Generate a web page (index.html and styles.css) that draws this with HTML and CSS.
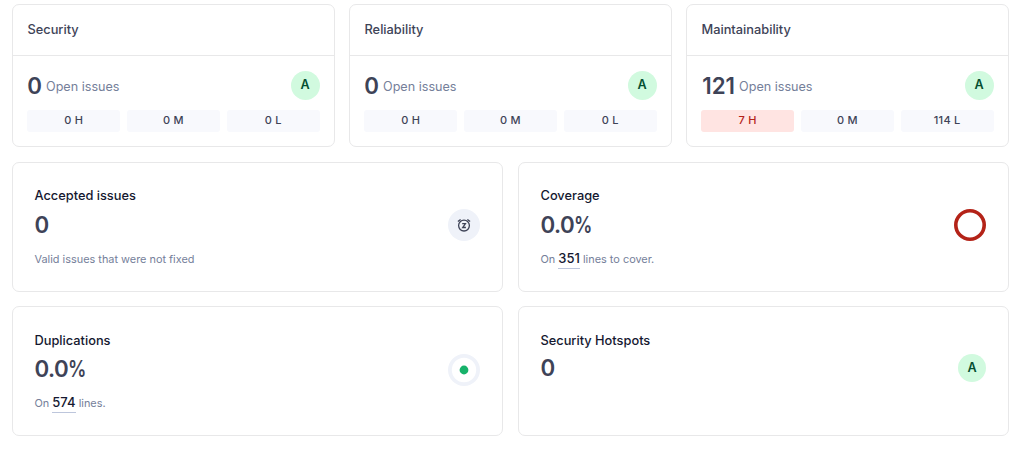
FILE: index.html
```html
<!DOCTYPE html>
<html lang="en"><head><meta charset="utf-8"><title>Overview</title><link rel="stylesheet" href="styles.css"></head>
<body><main class="page">
<div class="row">
<section class="card quality"><h2 class="head">Security</h2><div class="body"><div class="summary"><span class="value">0</span><span class="label">Open issues</span><span class="grade">A</span></div><div class="pills"><span class="pill">0 H</span><span class="pill">0 M</span><span class="pill">0 L</span></div></div></section>
<section class="card quality"><h2 class="head">Reliability</h2><div class="body"><div class="summary"><span class="value">0</span><span class="label">Open issues</span><span class="grade">A</span></div><div class="pills"><span class="pill">0 H</span><span class="pill">0 M</span><span class="pill">0 L</span></div></div></section>
<section class="card quality"><h2 class="head">Maintainability</h2><div class="body"><div class="summary"><span class="value count">121</span><span class="label">Open issues</span><span class="grade">A</span></div><div class="pills"><span class="pill high">7 H</span><span class="pill">0 M</span><span class="pill">114 L</span></div></div></section>
</div>
<div class="row">
<section class="card measure"><div><h2 class="title">Accepted issues</h2><div class="value">0</div><p class="note">Valid issues that were not fixed</p></div>
<svg class="icon" width="32" height="32" viewBox="0 0 32 32"><circle cx="16" cy="16" r="16" fill="#eff2f9"/><g fill="none" stroke="#3e4357" stroke-width="1.3"><circle cx="16" cy="16.6" r="5.4"/><path d="M9.9 12.6 12.6 10.4M22.1 12.6 19.4 10.4M14.2 14.7h3.2l-2.7 3.8h3.2"/></g></svg></section>
<section class="card measure"><div><h2 class="title">Coverage</h2><div class="value percent">0.0<span class="unit">%</span></div><p class="note">On <a class="link">351</a> lines to cover.</p></div>
<svg class="icon" width="32" height="32" viewBox="0 0 32 32"><circle cx="16" cy="16" r="14.2" fill="none" stroke="#b42318" stroke-width="3.6"/></svg></section>
</div>
<div class="row">
<section class="card measure"><div><h2 class="title">Duplications</h2><div class="value percent">0.0<span class="unit">%</span></div><p class="note">On <a class="link">574</a> lines.</p></div>
<svg class="icon" width="32" height="32" viewBox="0 0 32 32"><circle cx="16" cy="16" r="14.1" fill="none" stroke="#eff2f9" stroke-width="3.8"/><circle cx="16" cy="16" r="4.4" fill="#17b26a"/></svg></section>
<section class="card measure"><div><h2 class="title">Security Hotspots</h2><div class="value hotspots">0</div></div><span class="grade small">A</span></section>
</div>
</main></body></html>
```
FILE: styles.css
```css
* { box-sizing: border-box; }
body { margin: 0; background: #fff; font-family: Inter, sans-serif; color: #3e4357; }
h2, p { margin: 0; }
.page { padding: 4px 7px 0 12px; }
.row { display: flex; gap: 14px; }
.row + .row { margin-top: 15px; }
.row:nth-child(3) { margin-top: 14px; }
.row:nth-child(n+2) { gap: 15px; }
.card { flex: 1 1 0; min-width: 0; border: 1px solid #e8e8e9; border-radius: 7px; }
.quality { height: 143px; }
.head { height: 51px; border-bottom: 1px solid #e8e8e9; padding-left: 14.5px; font-size: 12.8px; line-height: 49px; font-weight: 550; }
.body { padding: 15px 14.5px 0 14.3px; }
.summary { display: flex; align-items: center; height: 29px; }
.value { font-size: 22.3px; line-height: 28px; font-weight: 600; }
.count { padding-left: 1px; }
.percent { letter-spacing: -.5px; }
.unit { display: inline-block; transform: scaleX(.82); transform-origin: left; }
.label { margin: 2px 0 0 4px; font-size: 12.6px; line-height: 18px; color: #75809a; font-weight: 400; }
.grade { margin-left: auto; width: 29px; height: 29px; border-radius: 50%; background: #d1fadf; color: #054f31; text-align: center; font-size: 12.6px; line-height: 28px; font-weight: 600; }
.pills { display: flex; gap: 7px; margin-top: 10px; }
.pill { flex: 1; height: 22px; border-radius: 3px; background: #f8f9fd; text-align: center; font-size: 11px; line-height: 21px; font-weight: 550; letter-spacing: .25px; }
.high { background: #ffe4e2; color: #b42318; }
.measure { height: 130px; display: flex; padding: 23px 22px 0 21.5px; }
.row:nth-child(3) .measure { padding-top: 24px; }
.title { padding-top: 1px; font-size: 12.8px; line-height: 18px; font-weight: 550; color: #151830; }
.measure .value { margin-top: 6px; }
.row:nth-child(3) .value { margin-top: 5px; }
.row:nth-child(3) .hotspots { margin-top: 4px; }
.note { margin-top: 10px; font-size: 10.9px; line-height: 20px; color: #75809a; font-weight: 400; }
.link { display: inline-block; height: 20px; line-height: 18px; font-size: 13px; font-weight: 550; color: #151830; border-bottom: 1px solid #bdc6dc; }
.icon { margin: 23px 0 0 auto; }
.small { margin-top: 23px; width: 28px; height: 28px; }
```
